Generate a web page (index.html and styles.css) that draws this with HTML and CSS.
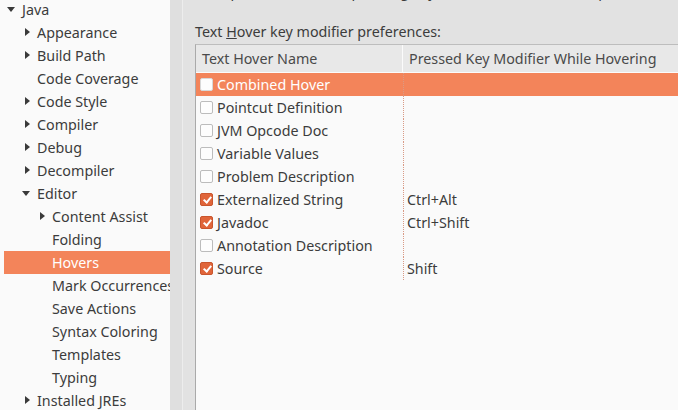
FILE: index.html
```html
<!DOCTYPE html>
<html>
<head>
<meta charset="utf-8">
<link rel="stylesheet" href="styles.css">
</head>
<body>
<div class="window">
  <div class="tree">
    <div class="node l0"><span class="tw down"></span><span>Java</span></div>
    <div class="node l1"><span class="tw right"></span><span>Appearance</span></div>
    <div class="node l1"><span class="tw right"></span><span>Build Path</span></div>
    <div class="node l1"><span class="tw"></span><span>Code Coverage</span></div>
    <div class="node l1"><span class="tw right"></span><span>Code Style</span></div>
    <div class="node l1"><span class="tw right"></span><span>Compiler</span></div>
    <div class="node l1"><span class="tw right"></span><span>Debug</span></div>
    <div class="node l1"><span class="tw right"></span><span>Decompiler</span></div>
    <div class="node l1"><span class="tw down"></span><span>Editor</span></div>
    <div class="node l2"><span class="tw right"></span><span>Content Assist</span></div>
    <div class="node l2"><span class="tw"></span><span>Folding</span></div>
    <div class="node l2 sel"><span class="tw"></span><span>Hovers</span></div>
    <div class="node l2"><span class="tw"></span><span>Mark Occurrences</span></div>
    <div class="node l2"><span class="tw"></span><span>Save Actions</span></div>
    <div class="node l2"><span class="tw"></span><span>Syntax Coloring</span></div>
    <div class="node l2"><span class="tw"></span><span>Templates</span></div>
    <div class="node l2"><span class="tw"></span><span>Typing</span></div>
    <div class="node l1"><span class="tw right"></span><span>Installed JREs</span></div>
  </div>
  <div class="sash"></div>
  <div class="content">
    <div class="clipped">
      <div class="clipped-line"><span class="cb"></span><span><u>E</u>xpand hover when pressing key (annotation hover on top)</span></div>
    </div>
    <div class="caption">Text <u>H</u>over key modifier preferences:</div>
    <div class="table">
      <div class="thead">
        <div class="th c1">Text Hover Name</div>
        <div class="th c2">Pressed Key Modifier While Hovering</div>
      </div>
      <div class="tr sel"><div class="td c1"><span class="cb"></span>Combined Hover</div><div class="td c2"></div></div>
      <div class="tr"><div class="td c1"><span class="cb"></span>Pointcut Definition</div><div class="td c2"></div></div>
      <div class="tr"><div class="td c1"><span class="cb"></span>JVM Opcode Doc</div><div class="td c2"></div></div>
      <div class="tr"><div class="td c1"><span class="cb"></span>Variable Values</div><div class="td c2"></div></div>
      <div class="tr"><div class="td c1"><span class="cb"></span>Problem Description</div><div class="td c2"></div></div>
      <div class="tr"><div class="td c1"><span class="cb on"></span>Externalized String</div><div class="td c2">Ctrl+Alt</div></div>
      <div class="tr"><div class="td c1"><span class="cb on"></span>Javadoc</div><div class="td c2">Ctrl+Shift</div></div>
      <div class="tr"><div class="td c1"><span class="cb"></span>Annotation Description</div><div class="td c2"></div></div>
      <div class="tr"><div class="td c1"><span class="cb on"></span>Source</div><div class="td c2">Shift</div></div>
      <div class="filler"></div>
    </div>
  </div>
</div>
</body>
</html>
```

FILE: styles.css
```css
html, body {
  margin: 0;
  padding: 0;
}
body {
  width: 678px;
  height: 410px;
  overflow: hidden;
  font-family: "Noto Sans", "DejaVu Sans", sans-serif;
  font-size: 14.3px;
  color: #3c3c3c;
  background: #e2e2e2;
}
.window {
  display: flex;
  height: 410px;
}
.tree {
  width: 166px;
  flex: none;
  padding-left: 4px;
  background: #fafafa;
  overflow: hidden;
  margin-top: -2.5px;
}
.node {
  height: 23px;
  display: flex;
  align-items: center;
  white-space: nowrap;
}
.node.l0 { padding-left: 3px; }
.node.l1 { padding-left: 18px; }
.node.l2 { padding-left: 33px; }
.node.sel {
  background: #f3845a;
  color: #ffffff;
}
.tw {
  width: 15px;
  height: 23px;
  flex: none;
  position: relative;
}
.tw.down::before {
  content: "";
  position: absolute;
  left: 0;
  top: 9px;
  border-left: 4.5px solid transparent;
  border-right: 4.5px solid transparent;
  border-top: 5px solid #3a3a3a;
}
.tw.right::before {
  content: "";
  position: absolute;
  left: 3px;
  top: 7px;
  border-top: 4.5px solid transparent;
  border-bottom: 4.5px solid transparent;
  border-left: 5.5px solid #3a3a3a;
}
.sash {
  width: 12px;
  flex: none;
  background: #dfdfdf;
  border-right: 1px solid #ededed;
}
.content {
  flex: 1;
  min-width: 0;
  padding-left: 12px;
  overflow: hidden;
  background: #e2e2e2;
}
.clipped {
  height: 3px;
  overflow: hidden;
}
.clipped-line {
  margin-top: -20px;
  height: 23px;
  display: flex;
  align-items: center;
  white-space: nowrap;
  padding-left: 3px;
}
.caption {
  margin-top: 17px;
  height: 23px;
  line-height: 23px;
  white-space: nowrap;
  margin-bottom: 1px;
}
.table {
  border-top: 1px solid #bdbdbd;
  border-left: 1px solid #aaaaaa;
  background: #fafafa;
  width: 700px;
  height: 400px;
}
.thead {
  display: flex;
  height: 27px;
  background: #e8e8e8;
  border-bottom: 1px solid #fbfbfb;
  color: #4a4a4a;
}
.th {
  display: flex;
  align-items: center;
  white-space: nowrap;
}
.th.c1 {
  width: 200px;
  padding-left: 6px;
  border-right: 1px solid #fbfbfb;
}
.th.c2 {
  padding-left: 6px;
}
.tr {
  display: flex;
  height: 23px;
}
.tr.sel {
  background: #f3845a;
  color: #ffffff;
}
.td {
  display: flex;
  align-items: center;
  white-space: nowrap;
}
.td.c1 {
  width: 203px;
  padding-left: 4px;
}
.td.c2 {
  flex: 1;
  padding-left: 3px;
  border-left: 1px dotted #d99a85;
}
.cb {
  width: 11px;
  height: 11px;
  flex: none;
  border: 1px solid #bcbcbc;
  border-radius: 2px;
  background: #fdfdfd;
  margin-right: 4px;
  box-sizing: content-box;
  position: relative;
}
.tr.sel .cb {
  border-color: #d8d8d8;
}
.cb.on {
  background: #e0653a;
  border-color: #c9552d;
}
.cb.on::after {
  content: "";
  position: absolute;
  left: 3.5px;
  top: 1px;
  width: 3px;
  height: 6px;
  border-right: 2px solid #ffffff;
  border-bottom: 2px solid #ffffff;
  transform: rotate(40deg);
}
.filler {
  height: 200px;
}
```
